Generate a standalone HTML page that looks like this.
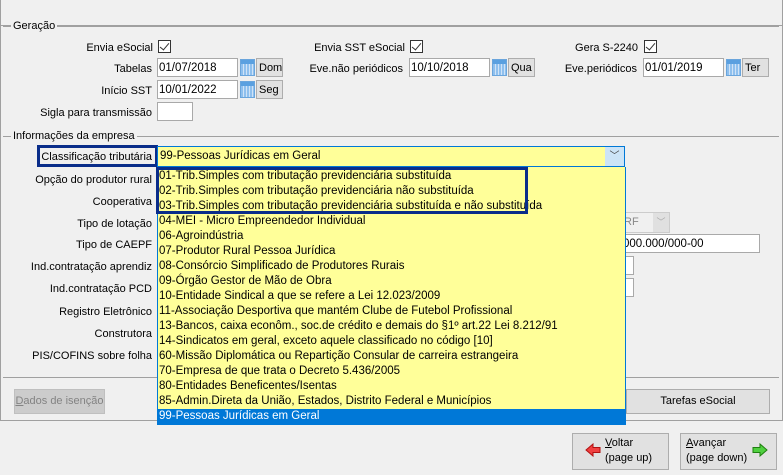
<!DOCTYPE html>
<html><head><meta charset="utf-8"><style>
*{box-sizing:border-box;margin:0;padding:0}
body{width:783px;height:475px;background:#f0f0f0;font-family:"Liberation Sans","DejaVu Sans",sans-serif;font-size:11px;color:#000;position:relative;overflow:hidden}
.a{position:absolute;white-space:nowrap}
.l{position:absolute;text-align:right;white-space:nowrap}
.in{position:absolute;background:#fff;border:1px solid #a9a9a9;height:19px;padding:3px 0 0 1px;font-size:11.5px}
.bt{position:absolute;background:#e1e1e1;border:1px solid #adadad;height:19px;padding:3px 0 0 2px;font-size:11px}
.cb{position:absolute;width:13px;height:13px;border:1px solid #333;background:#fff}
.cb:after{content:"";position:absolute;left:3px;top:0px;width:4px;height:8px;border:solid #333;border-width:0 1.3px 1.3px 0;transform:rotate(40deg)}
.cal{position:absolute;width:15px;height:17px;background:linear-gradient(#5aa0e0 0 4px,transparent 4px),repeating-linear-gradient(90deg,#8fc0ee 0 2px,#cfe3f7 2px 3px);border:1px solid #6aa5dc}
.it{height:15px;line-height:15px;padding-left:1px}
</style></head><body>
<div class="a" style="left:0;top:0;width:783px;height:421px;border:1px solid #a0a0a0;border-top:none"></div>
<div class="a" style="left:782px;top:0;width:1px;height:26px;background:#a0a0a0"></div>
<div class="a" style="left:0;top:25px;width:783px;height:1px;background:#a0a0a0"></div>
<div class="a" style="left:3px;top:26px;width:776px;height:1px;background:#a0a0a0"></div>
<div class="a" style="left:11px;top:20px;background:#f0f0f0;padding:0 2px">Geração</div>

<div class="l" style="right:630px;top:42px">Envia eSocial</div><div class="cb" style="left:158px;top:40px"></div>
<div class="l" style="right:378px;top:42px">Envia SST eSocial</div><div class="cb" style="left:410px;top:40px"></div>
<div class="l" style="right:145px;top:42px">Gera S-2240</div><div class="cb" style="left:644px;top:40px"></div>

<div class="l" style="right:631px;top:63px">Tabelas</div>
<div class="in" style="left:157px;top:58px;width:81px">01/07/2018</div><div class="cal" style="left:240px;top:59px"></div><div class="bt" style="left:256px;top:58px;width:27px">Dom</div>
<div class="l" style="right:380px;top:63px">Eve.não periódicos</div>
<div class="in" style="left:409px;top:58px;width:81px">10/10/2018</div><div class="cal" style="left:492px;top:59px"></div><div class="bt" style="left:508px;top:58px;width:27px">Qua</div>
<div class="l" style="right:146px;top:63px">Eve.periódicos</div>
<div class="in" style="left:643px;top:58px;width:81px">01/01/2019</div><div class="cal" style="left:726px;top:59px"></div><div class="bt" style="left:742px;top:58px;width:27px">Ter</div>

<div class="l" style="right:631px;top:85px">Início SST</div>
<div class="in" style="left:157px;top:80px;width:81px">10/01/2022</div><div class="cal" style="left:240px;top:81px"></div><div class="bt" style="left:256px;top:80px;width:27px">Seg</div>
<div class="l" style="right:631px;top:107px">Sigla para transmissão</div>
<div class="in" style="left:157px;top:102px;width:36px"></div>

<div class="a" style="left:3px;top:136px;width:776px;height:1px;background:#a0a0a0"></div>
<div class="a" style="left:11px;top:130px;background:#f0f0f0;padding:0 2px">Informações da empresa</div>

<div class="a" style="left:37px;top:145px;width:121px;height:22px;border:3px solid #0a2d8a"></div>
<div class="l" style="right:631px;top:151px">Classificação tributária</div>
<div class="a" style="left:157px;top:146px;width:468px;height:21px;border:1px solid #0078d7;background:#ffff99"></div>
<div class="a" style="left:158px;top:147px;width:447px;height:19px;background:#ffff99;padding:3px 0 0 2px;font-size:11.5px">99-Pessoas Jurídicas em Geral</div>
<div class="a" style="left:605px;top:147px;width:19px;height:19px;background:#cce4f7;text-align:center;color:#444;font-size:10px;line-height:19px">﹀</div>

<div class="l" style="right:631px;top:174px">Opção do produtor rural</div>
<div class="l" style="right:631px;top:196px">Cooperativa</div>
<div class="l" style="right:631px;top:218px">Tipo de lotação</div>
<div class="l" style="right:631px;top:239px">Tipo de CAEPF</div>
<div class="l" style="right:631px;top:261px">Ind.contratação aprendiz</div>
<div class="l" style="right:631px;top:283px">Ind.contratação PCD</div>
<div class="l" style="right:631px;top:306px">Registro Eletrônico</div>
<div class="l" style="right:631px;top:328px">Construtora</div>
<div class="l" style="right:631px;top:350px">PIS/COFINS sobre folha</div>

<div class="a" style="left:620px;top:212px;width:50px;height:21px;border:1px solid #ccc;background:#f0f0f0;color:#888;padding:3px 0 0 3px">RF</div>
<div class="a" style="left:653px;top:213px;width:16px;height:19px;background:#e0e0e0;color:#aaa;font-size:9px;text-align:center;line-height:19px">﹀</div>
<div class="in" style="left:620px;top:234px;width:140px;padding-left:2px">000.000/000-00</div>
<div class="in" style="left:620px;top:256px;width:14px"></div>
<div class="in" style="left:620px;top:278px;width:14px"></div>

<div class="a" style="left:3px;top:377px;width:776px;height:1px;background:#a0a0a0"></div>
<div class="a" style="left:14px;top:389px;width:91px;height:25px;background:#cccccc;border:1px solid #bfbfbf;color:#838383;text-align:center;line-height:23px"><u>D</u>ados de isenção</div>
<div class="a" style="left:626px;top:389px;width:144px;height:25px;background:#e1e1e1;border:1px solid #adadad;text-align:center;line-height:23px">Tarefas eSocial</div>

<div class="a" style="left:157px;top:167px;width:469px;height:258px;background:#ffff99;border:1px solid #0078d7;border-top:none;font-size:11.5px;padding-top:2px">
<div class="it">01-Trib.Simples com tributação previdenciária substituída</div>
<div class="it">02-Trib.Simples com tributação previdenciária não substituída</div>
<div class="it">03-Trib.Simples com tributação previdenciária substituída e não substituída</div>
<div class="it">04-MEI - Micro Empreendedor Individual</div>
<div class="it">06-Agroindústria</div>
<div class="it">07-Produtor Rural Pessoa Jurídica</div>
<div class="it">08-Consórcio Simplificado de Produtores Rurais</div>
<div class="it">09-Órgão Gestor de Mão de Obra</div>
<div class="it">10-Entidade Sindical a que se refere a Lei 12.023/2009</div>
<div class="it">11-Associação Desportiva que mantém Clube de Futebol Profissional</div>
<div class="it">13-Bancos, caixa econôm., soc.de crédito e demais do §1º art.22 Lei 8.212/91</div>
<div class="it">14-Sindicatos em geral, exceto aquele classificado no código [10]</div>
<div class="it">60-Missão Diplomática ou Repartição Consular de carreira estrangeira</div>
<div class="it">70-Empresa de que trata o Decreto 5.436/2005</div>
<div class="it">80-Entidades Beneficentes/Isentas</div>
<div class="it">85-Admin.Direta da União, Estados, Distrito Federal e Municípios</div>
<div class="it" style="background:#0078d7;color:#fff;height:16px">99-Pessoas Jurídicas em Geral</div>
</div>
<div class="a" style="left:156px;top:167px;width:372px;height:47px;border:3px solid #0a2d8a"></div>

<div class="a" style="left:572px;top:433px;width:97px;height:37px;background:#e1e1e1;border:1px solid #adadad"></div>
<svg class="a" style="left:585px;top:443px" width="16" height="14"><path d="M1 7 L8 1 V4.5 H15 V9.5 H8 V13 Z" fill="#f04040" stroke="#b01010"/></svg>
<div class="a" style="left:605px;top:436px;line-height:15px"><u>V</u>oltar<br>(page up)</div>
<div class="a" style="left:680px;top:433px;width:97px;height:37px;background:#e1e1e1;border:1px solid #adadad"></div>
<div class="a" style="left:686px;top:436px;line-height:15px"><u>A</u>vançar<br>(page down)</div>
<svg class="a" style="left:752px;top:443px" width="16" height="14"><path d="M15 7 L8 1 V4.5 H1 V9.5 H8 V13 Z" fill="#50d040" stroke="#208010"/></svg>
</body></html>
